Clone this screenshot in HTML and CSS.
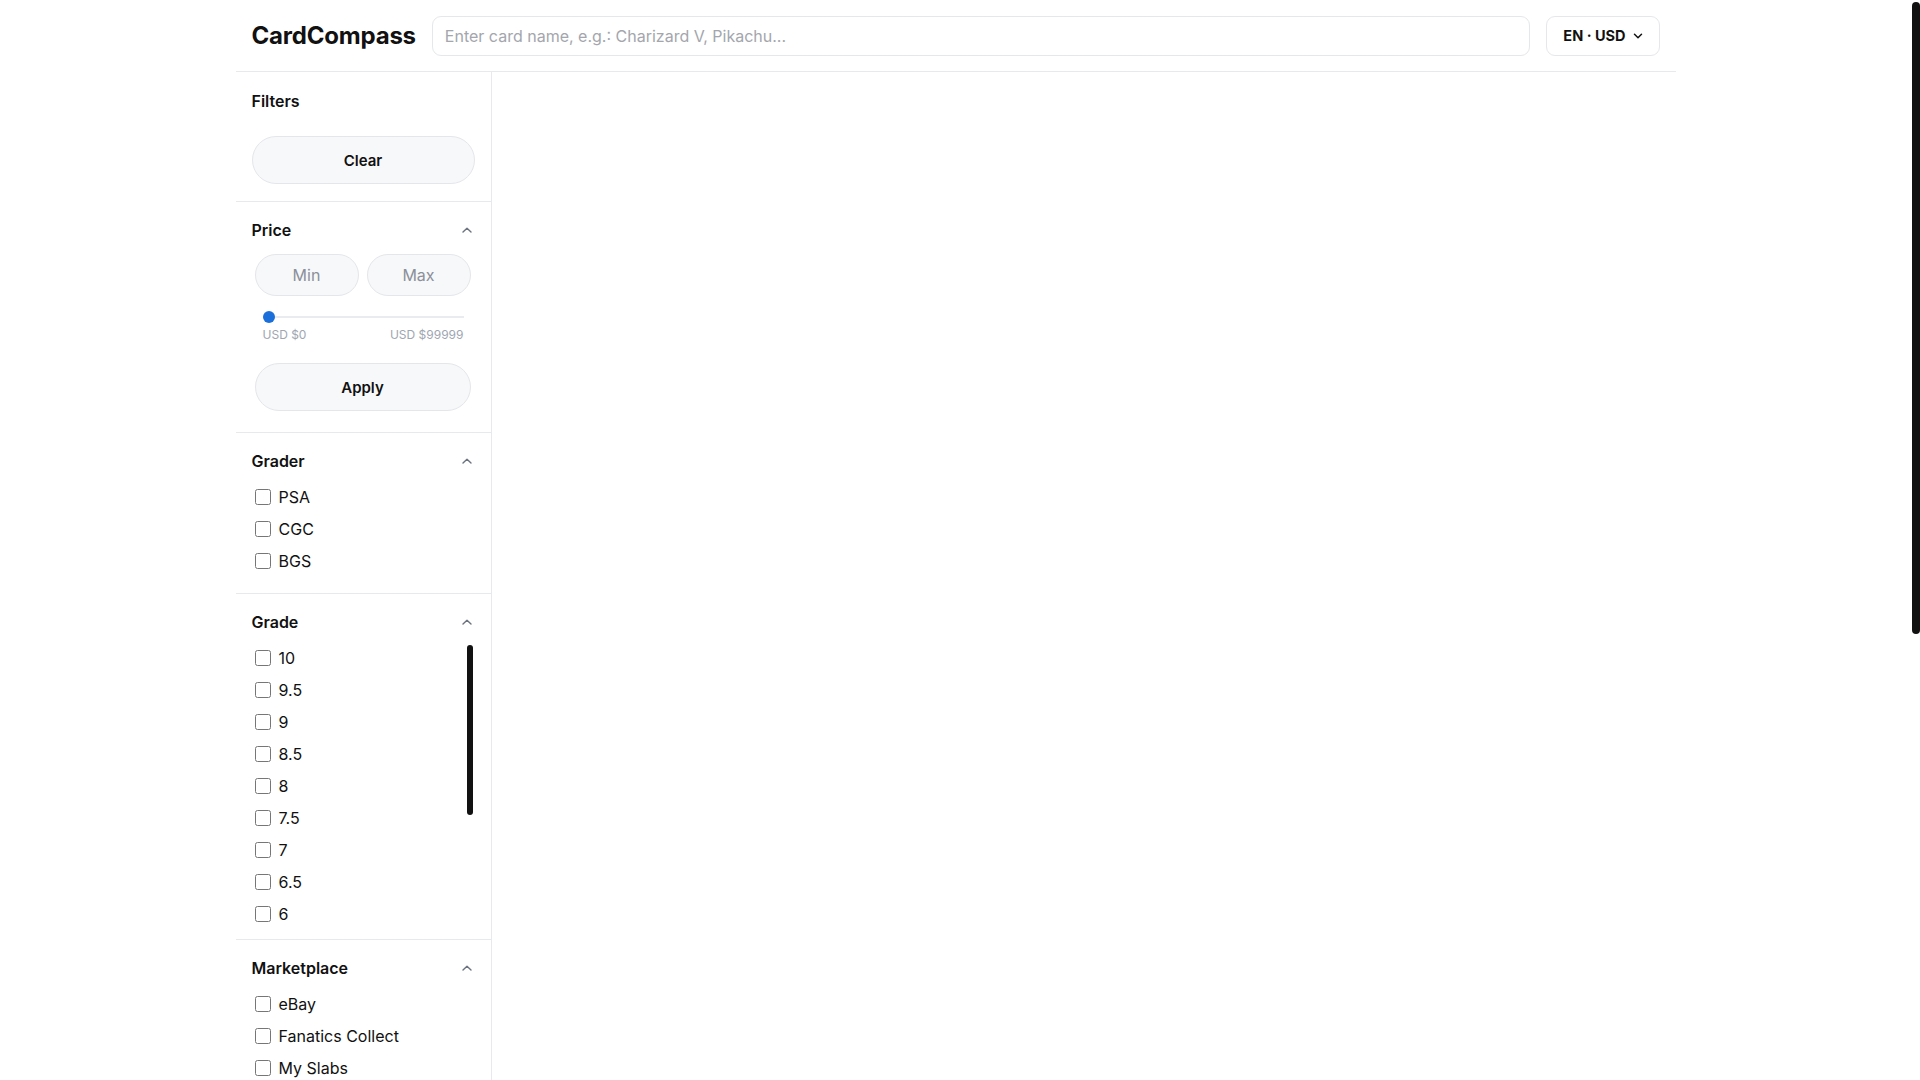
FILE: index.html
```html
<!DOCTYPE html>
<html lang="en">

<head>
  <meta charset="UTF-8" />
  <meta name="viewport" content="width=device-width, initial-scale=1.0" />
  <title>CardCompass</title>
  <link rel="stylesheet" href="styles.css">
</head>

<body>
  <div class="page">
    <!-- 顶部栏 -->
    <header class="topbar">
      <div class="logo">CardCompass</div>
      <input class="search" type="text" placeholder="Enter card name, e.g.: Charizard V, Pikachu..." />
      <button class="locale">
        <span>EN · USD</span>
        <svg width="10" height="6" viewBox="0 0 10 6" fill="none">
          <path d="M1.5 1.3 L5 4.7 L8.5 1.3" stroke="#111" stroke-width="1.5" stroke-linecap="round" stroke-linejoin="round" />
        </svg>
      </button>
    </header>

    <div class="layout">
      <!-- 筛选侧栏 -->
      <aside class="filters">
        <section class="panel panel-top">
          <h2 class="panel-title">Filters</h2>
          <button class="pill-btn">Clear</button>
        </section>

        <section class="panel panel-price">
          <div class="panel-head">
            <h3 class="panel-title">Price</h3>
            <span class="toggle">
              <svg width="10" height="6" viewBox="0 0 10 6" fill="none">
                <path d="M1 5 L5 1.2 L9 5" stroke="#6b7280" stroke-width="1.4" stroke-linecap="round" stroke-linejoin="round" />
              </svg>
            </span>
          </div>
          <div class="range-inputs">
            <input class="pill-input" type="text" placeholder="Min" />
            <input class="pill-input" type="text" placeholder="Max" />
          </div>
          <div class="slider">
            <div class="slider-track"><span class="slider-thumb"></span></div>
            <div class="slider-labels">
              <span>USD $0</span>
              <span>USD $99999</span>
            </div>
          </div>
          <button class="pill-btn apply">Apply</button>
        </section>

        <section class="panel">
          <div class="panel-head">
            <h3 class="panel-title">Grader</h3>
            <span class="toggle">
              <svg width="10" height="6" viewBox="0 0 10 6" fill="none">
                <path d="M1 5 L5 1.2 L9 5" stroke="#6b7280" stroke-width="1.4" stroke-linecap="round" stroke-linejoin="round" />
              </svg>
            </span>
          </div>
          <ul class="options">
            <li><label><input type="checkbox" /><span>PSA</span></label></li>
            <li><label><input type="checkbox" /><span>CGC</span></label></li>
            <li><label><input type="checkbox" /><span>BGS</span></label></li>
          </ul>
        </section>

        <section class="panel">
          <div class="panel-head">
            <h3 class="panel-title">Grade</h3>
            <span class="toggle">
              <svg width="10" height="6" viewBox="0 0 10 6" fill="none">
                <path d="M1 5 L5 1.2 L9 5" stroke="#6b7280" stroke-width="1.4" stroke-linecap="round" stroke-linejoin="round" />
              </svg>
            </span>
          </div>
          <!-- 列表可滚动，滚动条单独画出 -->
          <ul class="options scroll-list">
            <li><label><input type="checkbox" /><span>10</span></label></li>
            <li><label><input type="checkbox" /><span>9.5</span></label></li>
            <li><label><input type="checkbox" /><span>9</span></label></li>
            <li><label><input type="checkbox" /><span>8.5</span></label></li>
            <li><label><input type="checkbox" /><span>8</span></label></li>
            <li><label><input type="checkbox" /><span>7.5</span></label></li>
            <li><label><input type="checkbox" /><span>7</span></label></li>
            <li><label><input type="checkbox" /><span>6.5</span></label></li>
            <li><label><input type="checkbox" /><span>6</span></label></li>
            <span class="list-thumb"></span>
          </ul>
        </section>

        <section class="panel">
          <div class="panel-head">
            <h3 class="panel-title">Marketplace</h3>
            <span class="toggle">
              <svg width="10" height="6" viewBox="0 0 10 6" fill="none">
                <path d="M1 5 L5 1.2 L9 5" stroke="#6b7280" stroke-width="1.4" stroke-linecap="round" stroke-linejoin="round" />
              </svg>
            </span>
          </div>
          <ul class="options">
            <li><label><input type="checkbox" /><span>eBay</span></label></li>
            <li><label><input type="checkbox" /><span>Fanatics Collect</span></label></li>
            <li><label><input type="checkbox" /><span>My Slabs</span></label></li>
          </ul>
        </section>
      </aside>

      <!-- 结果区域 -->
      <main class="results"></main>
    </div>
  </div>

  <!-- 页面滚动条 -->
  <div class="page-thumb"></div>
</body>

</html>
```

FILE: styles.css
```css
* {
  margin: 0;
  padding: 0;
  box-sizing: border-box;
}

ul {
  list-style: none;
}

body {
  font-family: Inter, "Noto Sans", "Liberation Sans", sans-serif;
  color: #111;
  background: #fff;
  padding-right: 9px;
}

.page-thumb {
  position: fixed;
  top: 2px;
  right: 0;
  width: 8px;
  height: 632px;
  background: #111;
  border-radius: 4px;
}

.page {
  width: 1440px;
  margin: 0 auto;
}

.topbar {
  height: 72px;
  display: flex;
  align-items: center;
  gap: 16px;
  padding: 0 16px;
  border-bottom: 1px solid #e8e9ec;
}

.logo {
  font-size: 24px;
  font-weight: 700;
  letter-spacing: -0.2px;
  white-space: nowrap;
}

.search {
  flex: 1;
  height: 40px;
  border: 1px solid #e6e7ea;
  border-radius: 9px;
  padding: 0 12px;
  font: 16px Inter, "Liberation Sans", sans-serif;
  color: #111;
  outline: none;
}

.search::placeholder {
  color: #a3a6ad;
}

.locale {
  height: 40px;
  display: flex;
  align-items: center;
  gap: 7px;
  padding: 0 16px;
  border: 1px solid #e6e7ea;
  border-radius: 9px;
  background: #fff;
  font: 700 14.5px Inter, "Liberation Sans", sans-serif;
  color: #111;
}

.layout {
  display: flex;
  min-height: 1774px;
}

.filters {
  width: 256px;
  border-right: 1px solid #e8e9ec;
}

.results {
  flex: 1;
}

.panel {
  padding: 16px;
  border-bottom: 1px solid #e8e9ec;
}

.panel-top {
  padding-top: 17px;
  padding-bottom: 17px;
}

.panel-title {
  font-size: 16px;
  font-weight: 600;
  line-height: 24px;
}

.panel-top .panel-title {
  margin-bottom: 23px;
}

.panel-head {
  display: flex;
  align-items: center;
  justify-content: space-between;
}

.toggle {
  width: 16px;
  height: 24px;
  display: flex;
  align-items: center;
  justify-content: center;
}

.pill-btn {
  display: block;
  width: 100%;
  height: 48px;
  border: 1px solid #e4e6ea;
  border-radius: 999px;
  background: #f7f8fa;
  font: 600 15px Inter, "Liberation Sans", sans-serif;
  color: #111;
}

.panel-price {
  padding-top: 16px;
  padding-bottom: 21px;
}

.range-inputs {
  display: flex;
  gap: 8px;
  padding: 0 4px 0 3px;
  margin-top: 12px;
}

.pill-input {
  flex: 1;
  min-width: 0;
  height: 42px;
  border: 1px solid #e4e6ea;
  border-radius: 999px;
  background: #f7f8fa;
  text-align: center;
  font: 16px Inter, "Liberation Sans", sans-serif;
  outline: none;
}

.pill-input::placeholder {
  color: #8b9099;
}

.slider {
  margin: 15px 11px 0 11px;
}

.slider-track {
  height: 12px;
  display: flex;
  align-items: center;
  background: linear-gradient(#e9ebef, #e9ebef) center / 100% 2px no-repeat;
}

.slider-thumb {
  width: 12px;
  height: 12px;
  border-radius: 50%;
  background: #1b6fdb;
}

.slider-labels {
  display: flex;
  justify-content: space-between;
  margin-top: 4px;
  font-size: 12px;
  line-height: 16px;
  color: #a0a6b1;
}

.apply {
  width: calc(100% - 7px);
  margin: 20px 0 0 3px;
}

.options {
  margin-top: 8px;
}

.options li {
  height: 32px;
  display: flex;
  align-items: center;
}

.options label {
  display: flex;
  align-items: center;
  font-size: 16px;
}

.options input {
  width: 16px;
  height: 16px;
  margin: 0 8px 0 3px;
}

.scroll-list {
  position: relative;
  height: 281px;
  margin-right: 2px;
}

.list-thumb {
  position: absolute;
  top: 3px;
  right: 0;
  width: 6px;
  height: 170px;
  background: #111;
  border-radius: 3px;
}
```
